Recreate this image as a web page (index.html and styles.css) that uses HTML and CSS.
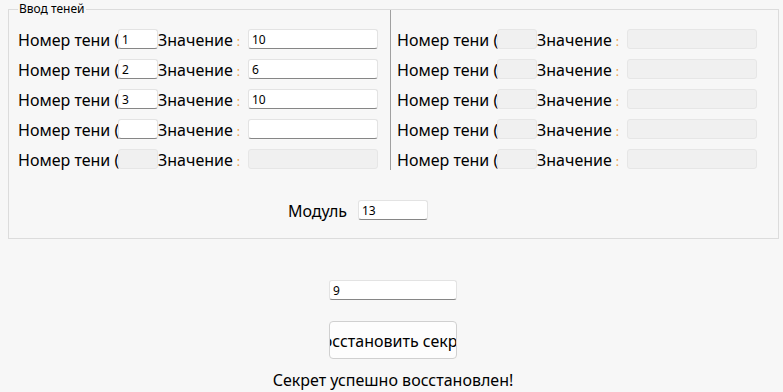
FILE: index.html
```html
<!DOCTYPE html>
<html lang="ru">
<head>
  <meta charset="UTF-8" />
  <title>Разделение секрета</title>
  <link rel="stylesheet" href="styles.css">
</head>
<body>
  <fieldset class="shadows-box">
    <legend>Ввод теней</legend>

    <div class="columns">
      <div class="column column-left">
        <div class="share-row">
          <span class="num-label">Номер тени (</span>
          <input class="field field-num" type="text" value="1">
          <span class="val-label">Значение<span class="colon">:</span></span>
          <input class="field field-val" type="text" value="10">
        </div>
        <div class="share-row">
          <span class="num-label">Номер тени (</span>
          <input class="field field-num" type="text" value="2">
          <span class="val-label">Значение<span class="colon">:</span></span>
          <input class="field field-val" type="text" value="6">
        </div>
        <div class="share-row">
          <span class="num-label">Номер тени (</span>
          <input class="field field-num" type="text" value="3">
          <span class="val-label">Значение<span class="colon">:</span></span>
          <input class="field field-val" type="text" value="10">
        </div>
        <div class="share-row">
          <span class="num-label">Номер тени (</span>
          <input class="field field-num" type="text" value="">
          <span class="val-label">Значение<span class="colon">:</span></span>
          <input class="field field-val" type="text" value="">
        </div>
        <div class="share-row">
          <span class="num-label">Номер тени (</span>
          <input class="field field-num" type="text" disabled>
          <span class="val-label">Значение<span class="colon">:</span></span>
          <input class="field field-val" type="text" disabled>
        </div>
      </div>

      <div class="column column-right">
        <div class="share-row">
          <span class="num-label">Номер тени (</span>
          <input class="field field-num" type="text" disabled>
          <span class="val-label">Значение<span class="colon">:</span></span>
          <input class="field field-val" type="text" disabled>
        </div>
        <div class="share-row">
          <span class="num-label">Номер тени (</span>
          <input class="field field-num" type="text" disabled>
          <span class="val-label">Значение<span class="colon">:</span></span>
          <input class="field field-val" type="text" disabled>
        </div>
        <div class="share-row">
          <span class="num-label">Номер тени (</span>
          <input class="field field-num" type="text" disabled>
          <span class="val-label">Значение<span class="colon">:</span></span>
          <input class="field field-val" type="text" disabled>
        </div>
        <div class="share-row">
          <span class="num-label">Номер тени (</span>
          <input class="field field-num" type="text" disabled>
          <span class="val-label">Значение<span class="colon">:</span></span>
          <input class="field field-val" type="text" disabled>
        </div>
        <div class="share-row">
          <span class="num-label">Номер тени (</span>
          <input class="field field-num" type="text" disabled>
          <span class="val-label">Значение<span class="colon">:</span></span>
          <input class="field field-val" type="text" disabled>
        </div>
      </div>
    </div>

    <div class="module-row">
      <span class="module-label">Модуль</span>
      <input class="field field-module" type="text" value="13">
    </div>
  </fieldset>

  <div class="result">
    <input class="field field-result" type="text" value="9">
    <button class="restore-btn" type="button"><span>Восстановить секрет</span></button>
    <div class="status">Секрет успешно восстановлен!</div>
  </div>
</body>
</html>
```

FILE: styles.css
```css
body {
  margin: 0;
  background: #f7f7f7;
  font-family: 'Noto Sans', 'Open Sans', sans-serif;
  font-size: 16px;
  color: #000;
}

.shadows-box {
  width: 769px;
  margin: 2px 0 0 8px;
  padding: 0 0 18px 0;
  border: 1px solid #dcdcdc;
  box-sizing: content-box;
}

.shadows-box legend {
  margin-left: 9px;
  padding: 0 1px;
  font-size: 12px;
  line-height: 14px;
}

.columns {
  display: flex;
  height: 160px;
  margin-top: -6px;
}

.column {
  padding-top: 19px;
  box-sizing: border-box;
}

.column-left {
  width: 382px;
  padding-left: 9px;
  border-right: 1px solid #a0a0a0;
}

.column-right {
  padding-left: 6px;
}

.share-row {
  display: flex;
  align-items: flex-start;
  height: 20px;
  margin-bottom: 10px;
  white-space: nowrap;
}

.num-label,
.val-label,
.module-label {
  line-height: 23px;
}

.num-label {
  width: 100px;
}

.val-label {
  width: 90px;
}

.colon {
  margin-left: 4px;
  font-size: 12px;
  color: #f0a040;
}

.field {
  height: 20px;
  box-sizing: border-box;
  margin: 0;
  padding: 0 3px;
  font-family: 'Noto Sans', sans-serif;
  font-size: 12px;
  color: #000;
  background: #fff;
  border: 1px solid #e3e3e3;
  border-bottom-color: #868686;
  border-radius: 3px;
  outline: none;
}

.field:disabled {
  background: #f0f0f0;
  border-color: #e6e6e6;
}

.field-num {
  width: 40px;
}

.field-val {
  width: 130px;
}

.module-row {
  display: flex;
  align-items: flex-start;
  height: 20px;
  margin-top: 30px;
  padding-left: 279px;
}

.module-label {
  width: 70px;
}

.field-module {
  width: 70px;
}

.result {
  display: flex;
  flex-direction: column;
  align-items: center;
  padding-top: 41px;
  padding-left: 3px;
}

.field-result {
  width: 128px;
}

.restore-btn {
  display: flex;
  justify-content: center;
  align-items: center;
  width: 128px;
  height: 38px;
  margin-top: 21px;
  padding: 1px 0 0;
  overflow: hidden;
  white-space: nowrap;
  font-family: 'Noto Sans', sans-serif;
  font-size: 16px;
  color: #000;
  background: #fdfdfd;
  border: 1px solid #d0d0d0;
  border-radius: 4px;
}

.status {
  margin-top: 11px;
  font-size: 16px;
  line-height: 20px;
}
```
